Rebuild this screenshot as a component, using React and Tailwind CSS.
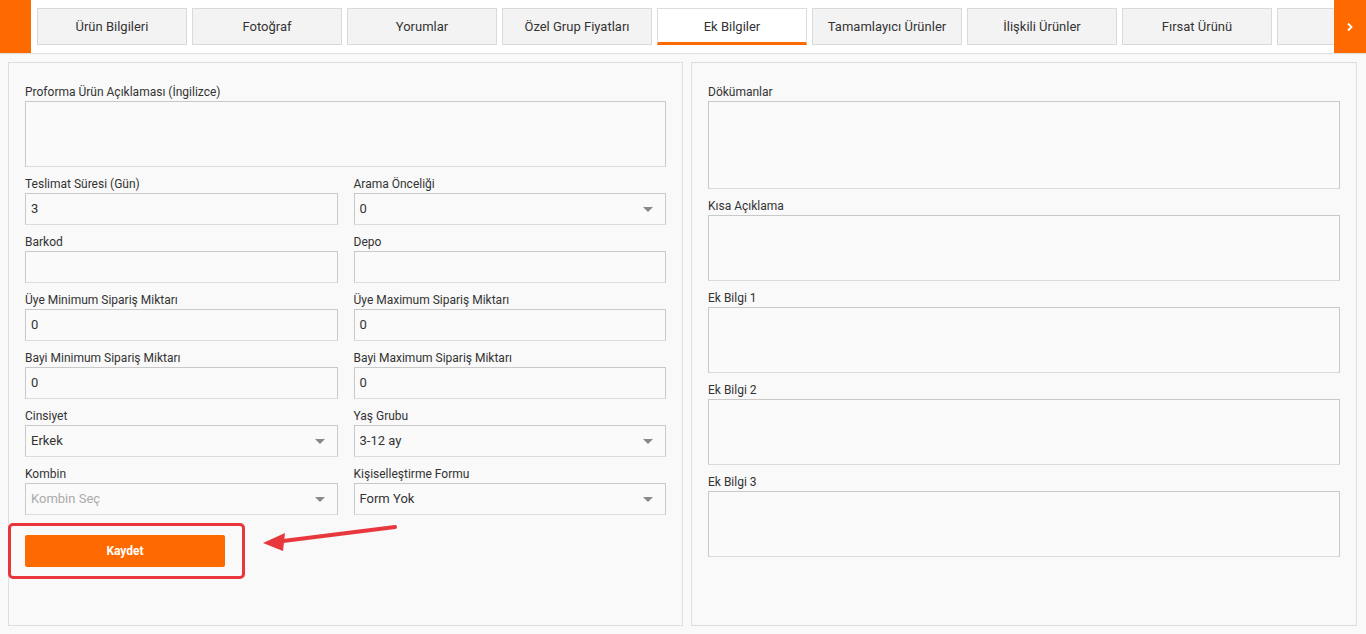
import { useState } from 'react';

const tabs = [
  'Ürün Bilgileri',
  'Fotoğraf',
  'Yorumlar',
  'Özel Grup Fiyatları',
  'Ek Bilgiler',
  'Tamamlayıcı Ürünler',
  'İlişkili Ürünler',
  'Fırsat Ürünü',
  '',
];

const fields = [
  { label: 'Teslimat Süresi (Gün)', value: '3' },
  { label: 'Arama Önceliği', value: '0', select: true },
  { label: 'Barkod', value: '' },
  { label: 'Depo', value: '' },
  { label: 'Üye Minimum Sipariş Miktarı', value: '0' },
  { label: 'Üye Maximum Sipariş Miktarı', value: '0' },
  { label: 'Bayi Minimum Sipariş Miktarı', value: '0' },
  { label: 'Bayi Maximum Sipariş Miktarı', value: '0' },
  { label: 'Cinsiyet', value: 'Erkek', select: true },
  { label: 'Yaş Grubu', value: '3-12 ay', select: true },
  { label: 'Kombin', value: 'Kombin Seç', select: true, placeholder: true },
  { label: 'Kişiselleştirme Formu', value: 'Form Yok', select: true },
];

const notes = [
  { label: 'Dökümanlar', tall: true },
  { label: 'Kısa Açıklama' },
  { label: 'Ek Bilgi 1' },
  { label: 'Ek Bilgi 2' },
  { label: 'Ek Bilgi 3' },
];

function Label({ children }) {
  return <div className="text-[12px] leading-[16px] text-[#333] pt-[1px] mb-[1px]">{children}</div>;
}

function Box({ className = '', children }) {
  return (
    <div
      className={`border border-[#c9c9c9] border-b-[#dcdcdc] bg-[#fafafa] ${className}`}
    >
      {children}
    </div>
  );
}

function Field({ label, value, select, placeholder }) {
  return (
    <div className="mb-[8px]">
      <Label>{label}</Label>
      <Box className="h-[32px] flex items-center justify-between pl-[5px] pr-[12px]">
        <span className={`text-[13px] ${placeholder ? 'text-[#aaa]' : 'text-[#333]'}`}>{value}</span>
        {select && (
          <span className="w-0 h-0 border-l-[5px] border-r-[5px] border-t-[5px] border-l-transparent border-r-transparent border-t-[#888]" />
        )}
      </Box>
    </div>
  );
}

export default function App() {
  const [active] = useState('Ek Bilgiler');

  return (
    <div className="w-[1366px] h-[634px] overflow-hidden bg-[#f9f9f9] font-['Roboto',sans-serif] text-[#333]">
      {/* tab strip */}
      <div className="flex h-[54px] bg-white border-b border-[#dedede]">
        <div className="w-[31px] h-[53px] bg-[#ff6a00] shrink-0" />
        <div className="flex-1 overflow-hidden flex gap-[5px] pl-[6px] pt-[8px]">
          {tabs.map((t, i) => {
            const on = t === active;
            return (
              <div
                key={i}
                className={`w-[150px] h-[37px] shrink-0 flex items-center justify-center text-[13px] text-[#333] border ${
                  on
                    ? 'bg-white border-[#ddd] border-b-[3px] border-b-[#ff6a00] pt-[2px]'
                    : 'bg-[#f3f3f3] border-[#dadada]'
                }`}
              >
                {t}
              </div>
            );
          })}
        </div>
        <div className="w-[32px] h-[53px] bg-[#ff6a00] shrink-0 flex items-center justify-center">
          <svg width="8" height="10" viewBox="0 0 8 10">
            <path d="M2 1.5 L5.5 5 L2 8.5" fill="none" stroke="#fff" strokeWidth="1.8" />
          </svg>
        </div>
      </div>

      <div className="flex gap-[8px] px-[8px] pt-[8px]">
        {/* left panel */}
        <div className="w-[675px] h-[564px] border border-[#dedede] bg-[#f9f9f9] px-[16px] pt-[20px]">
          <div className="mb-[8px]">
            <Label>Proforma Ürün Açıklaması (İngilizce)</Label>
            <Box className="h-[66px]" />
          </div>
          <div className="grid grid-cols-2 gap-x-[16px]">
            {fields.map((f) => (
              <Field key={f.label} {...f} />
            ))}
          </div>
          <div className="relative mt-[12px] w-[200px]">
            <div className="absolute left-[-17px] top-[-12px] w-[237px] h-[56px] border-[3px] border-[#e8363c] rounded-[5px]" />
            <button className="w-[200px] h-[32px] bg-[#ff6a00] rounded-[2px] text-white text-[12px] font-bold">
              Kaydet
            </button>
            <svg
              className="absolute left-[236px] top-[-10px]"
              width="140"
              height="30"
              viewBox="0 0 140 30"
            >
              <line x1="134" y1="2" x2="14" y2="17" stroke="#e8383d" strokeWidth="4" strokeLinecap="round" />
              <polygon points="2,18 24,8 22,26" fill="#e8383d" />
            </svg>
          </div>
        </div>

        {/* right panel */}
        <div className="w-[666px] h-[564px] border border-[#dedede] bg-[#f9f9f9] px-[16px] pt-[20px]">
          {notes.map((n) => (
            <div key={n.label} className="mb-[8px]">
              <Label>{n.label}</Label>
              <Box className={n.tall ? 'h-[88px]' : 'h-[66px]'} />
            </div>
          ))}
        </div>
      </div>
    </div>
  );
}
